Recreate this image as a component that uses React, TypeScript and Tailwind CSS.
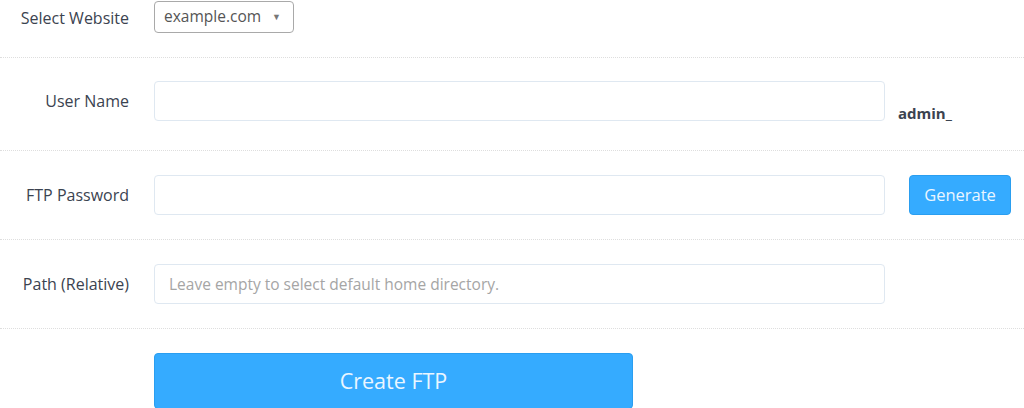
import React from 'react';

const labelBase = 'w-[139px] shrink-0 pr-[10px] text-right text-[16px] text-[#3b4350]';
const labelCls = `${labelBase} leading-[40px]`;
const inputCls =
  'h-[40px] w-[731px] shrink-0 rounded-[4px] border border-[#dfe8f1] bg-white px-[14px] text-[15.5px] text-[#555] outline-none placeholder:text-[#a5a5a5]';

export default function App() {
  return (
    <div className="min-h-screen bg-white" style={{ fontFamily: '"Open Sans", "Noto Sans", sans-serif' }}>
      <form className="flex flex-col" onSubmit={(e) => e.preventDefault()}>
        <div className="flex items-start gap-[15px] border-b border-dotted border-[#dedede] pb-[24px] pt-[1px]">
          <label className={`${labelBase} pt-[2px] leading-[30px]`}>Select Website</label>
          <div className="relative h-[32px] w-[140px] rounded-[4px] border border-[#a9a9a9] bg-white">
            <span className="absolute left-[9px] top-[3px] text-[15.5px] text-[#555]">example.com</span>
            <span className="absolute right-[12px] top-[8px] text-[9px] text-[#777]">▼</span>
          </div>
        </div>

        <div className="flex items-start gap-[15px] border-b border-dotted border-[#dedede] pb-[26px] pt-[23px]">
          <label className={labelCls}>User Name</label>
          <input className={inputCls} />
          <span className="ml-[-2px] mt-[21px] text-[15px] font-bold leading-[22px] text-[#3b4350]">admin_</span>
        </div>

        <div className="flex items-start gap-[15px] border-b border-dotted border-[#dedede] pb-[24px] pt-[24px]">
          <label className={labelCls}>FTP Password</label>
          <input className={inputCls} type="password" />
          <button
            type="button"
            className="ml-[9px] h-[40px] w-[102px] rounded-[4px] border border-[#2a9ef0] bg-[#35abff] text-[16.5px] text-[#eaf6ff]"
          >
            Generate
          </button>
        </div>

        <div className="flex items-start gap-[15px] border-b border-dotted border-[#dedede] pb-[24px] pt-[24px]">
          <label className={labelCls}>Path (Relative)</label>
          <input className={inputCls} placeholder="Leave empty to select default home directory." />
        </div>

        <div className="flex gap-[15px] pt-[24px]">
          <div className="w-[139px] shrink-0" />
          <button
            type="submit"
            className="h-[56px] w-[479px] rounded-[4px] border border-[#2a9ef0] bg-[#35abff] text-[21.5px] text-[#eaf6ff]"
          >
            Create FTP
          </button>
        </div>
      </form>
    </div>
  );
}
